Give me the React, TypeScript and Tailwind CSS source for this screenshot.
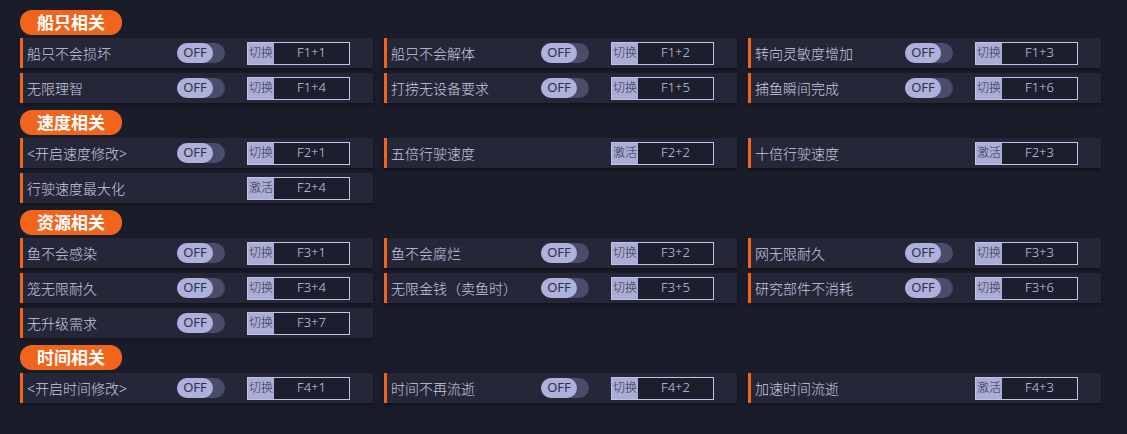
type Item = { name: string; toggle: boolean; key: string };
type Section = { title: string; items: Item[] };

const SECTIONS: Section[] = [
  {
    title: "船只相关",
    items: [
      { name: "船只不会损坏", toggle: true, key: "F1+1" },
      { name: "船只不会解体", toggle: true, key: "F1+2" },
      { name: "转向灵敏度增加", toggle: true, key: "F1+3" },
      { name: "无限理智", toggle: true, key: "F1+4" },
      { name: "打捞无设备要求", toggle: true, key: "F1+5" },
      { name: "捕鱼瞬间完成", toggle: true, key: "F1+6" },
    ],
  },
  {
    title: "速度相关",
    items: [
      { name: "<开启速度修改>", toggle: true, key: "F2+1" },
      { name: "五倍行驶速度", toggle: false, key: "F2+2" },
      { name: "十倍行驶速度", toggle: false, key: "F2+3" },
      { name: "行驶速度最大化", toggle: false, key: "F2+4" },
    ],
  },
  {
    title: "资源相关",
    items: [
      { name: "鱼不会感染", toggle: true, key: "F3+1" },
      { name: "鱼不会腐烂", toggle: true, key: "F3+2" },
      { name: "网无限耐久", toggle: true, key: "F3+3" },
      { name: "笼无限耐久", toggle: true, key: "F3+4" },
      { name: "无限金钱（卖鱼时）", toggle: true, key: "F3+5" },
      { name: "研究部件不消耗", toggle: true, key: "F3+6" },
      { name: "无升级需求", toggle: true, key: "F3+7" },
    ],
  },
  {
    title: "时间相关",
    items: [
      { name: "<开启时间修改>", toggle: true, key: "F4+1" },
      { name: "时间不再流逝", toggle: true, key: "F4+2" },
      { name: "加速时间流逝", toggle: false, key: "F4+3" },
    ],
  },
];

function Toggle() {
  return (
    <div className="flex h-[20px] w-[48px] items-center rounded-full bg-[#4a4d69]">
      <div className="flex h-[20px] w-[36px] items-center justify-center rounded-full bg-[#aeb1dc] text-[13px] text-[#2e3047]">
        OFF
      </div>
    </div>
  );
}

function HotKey({ label, keys }: { label: string; keys: string }) {
  return (
    <div className="flex h-[23px] w-[103px] border border-[#bfc3e8] bg-[#1c1e2e]">
      <div className="flex w-[26px] items-center justify-center bg-[#aaaed6] text-[12px] font-light text-[#2e3047]">{label}</div>
      <div className="flex flex-1 items-center justify-center text-[13px] font-light text-[#c9cce2]">{keys}</div>
    </div>
  );
}

function Row({ item }: { item: Item }) {
  return (
    <div className="flex h-[30px] items-center border-l-[3px] border-[#f0641c] bg-[#252738] shadow-[0_2px_3px_rgba(0,0,0,0.35)]">
      <span className="ml-[4px] w-[150px] truncate text-[14px] font-light text-[#c8cbe0]">{item.name}</span>
      <div className="w-[70px]">{item.toggle && <Toggle />}</div>
      <HotKey label={item.toggle ? "切换" : "激活"} keys={item.key} />
    </div>
  );
}

export default function App() {
  return (
    <div
      className="h-[434px] w-[1127px] overflow-hidden bg-[#1a1c29] pl-[20px] pt-[10px]"
      style={{ fontFamily: '"Noto Sans", "Noto Sans CJK SC", sans-serif' }}
    >
      <div className="flex flex-col gap-[7px]">
        {SECTIONS.map((s) => (
          <div key={s.title} className="flex flex-col gap-[3px]">
            <div className="flex h-[25px] w-[102px] items-center justify-center rounded-[12px] bg-[#f0641c] text-[17px] font-bold text-white">
              {s.title}
            </div>
            <div className="grid grid-cols-[353px_353px_353px] gap-x-[11px] gap-y-[5px]">
              {s.items.map((it) => (
                <Row key={it.key} item={it} />
              ))}
            </div>
          </div>
        ))}
      </div>
    </div>
  );
}
